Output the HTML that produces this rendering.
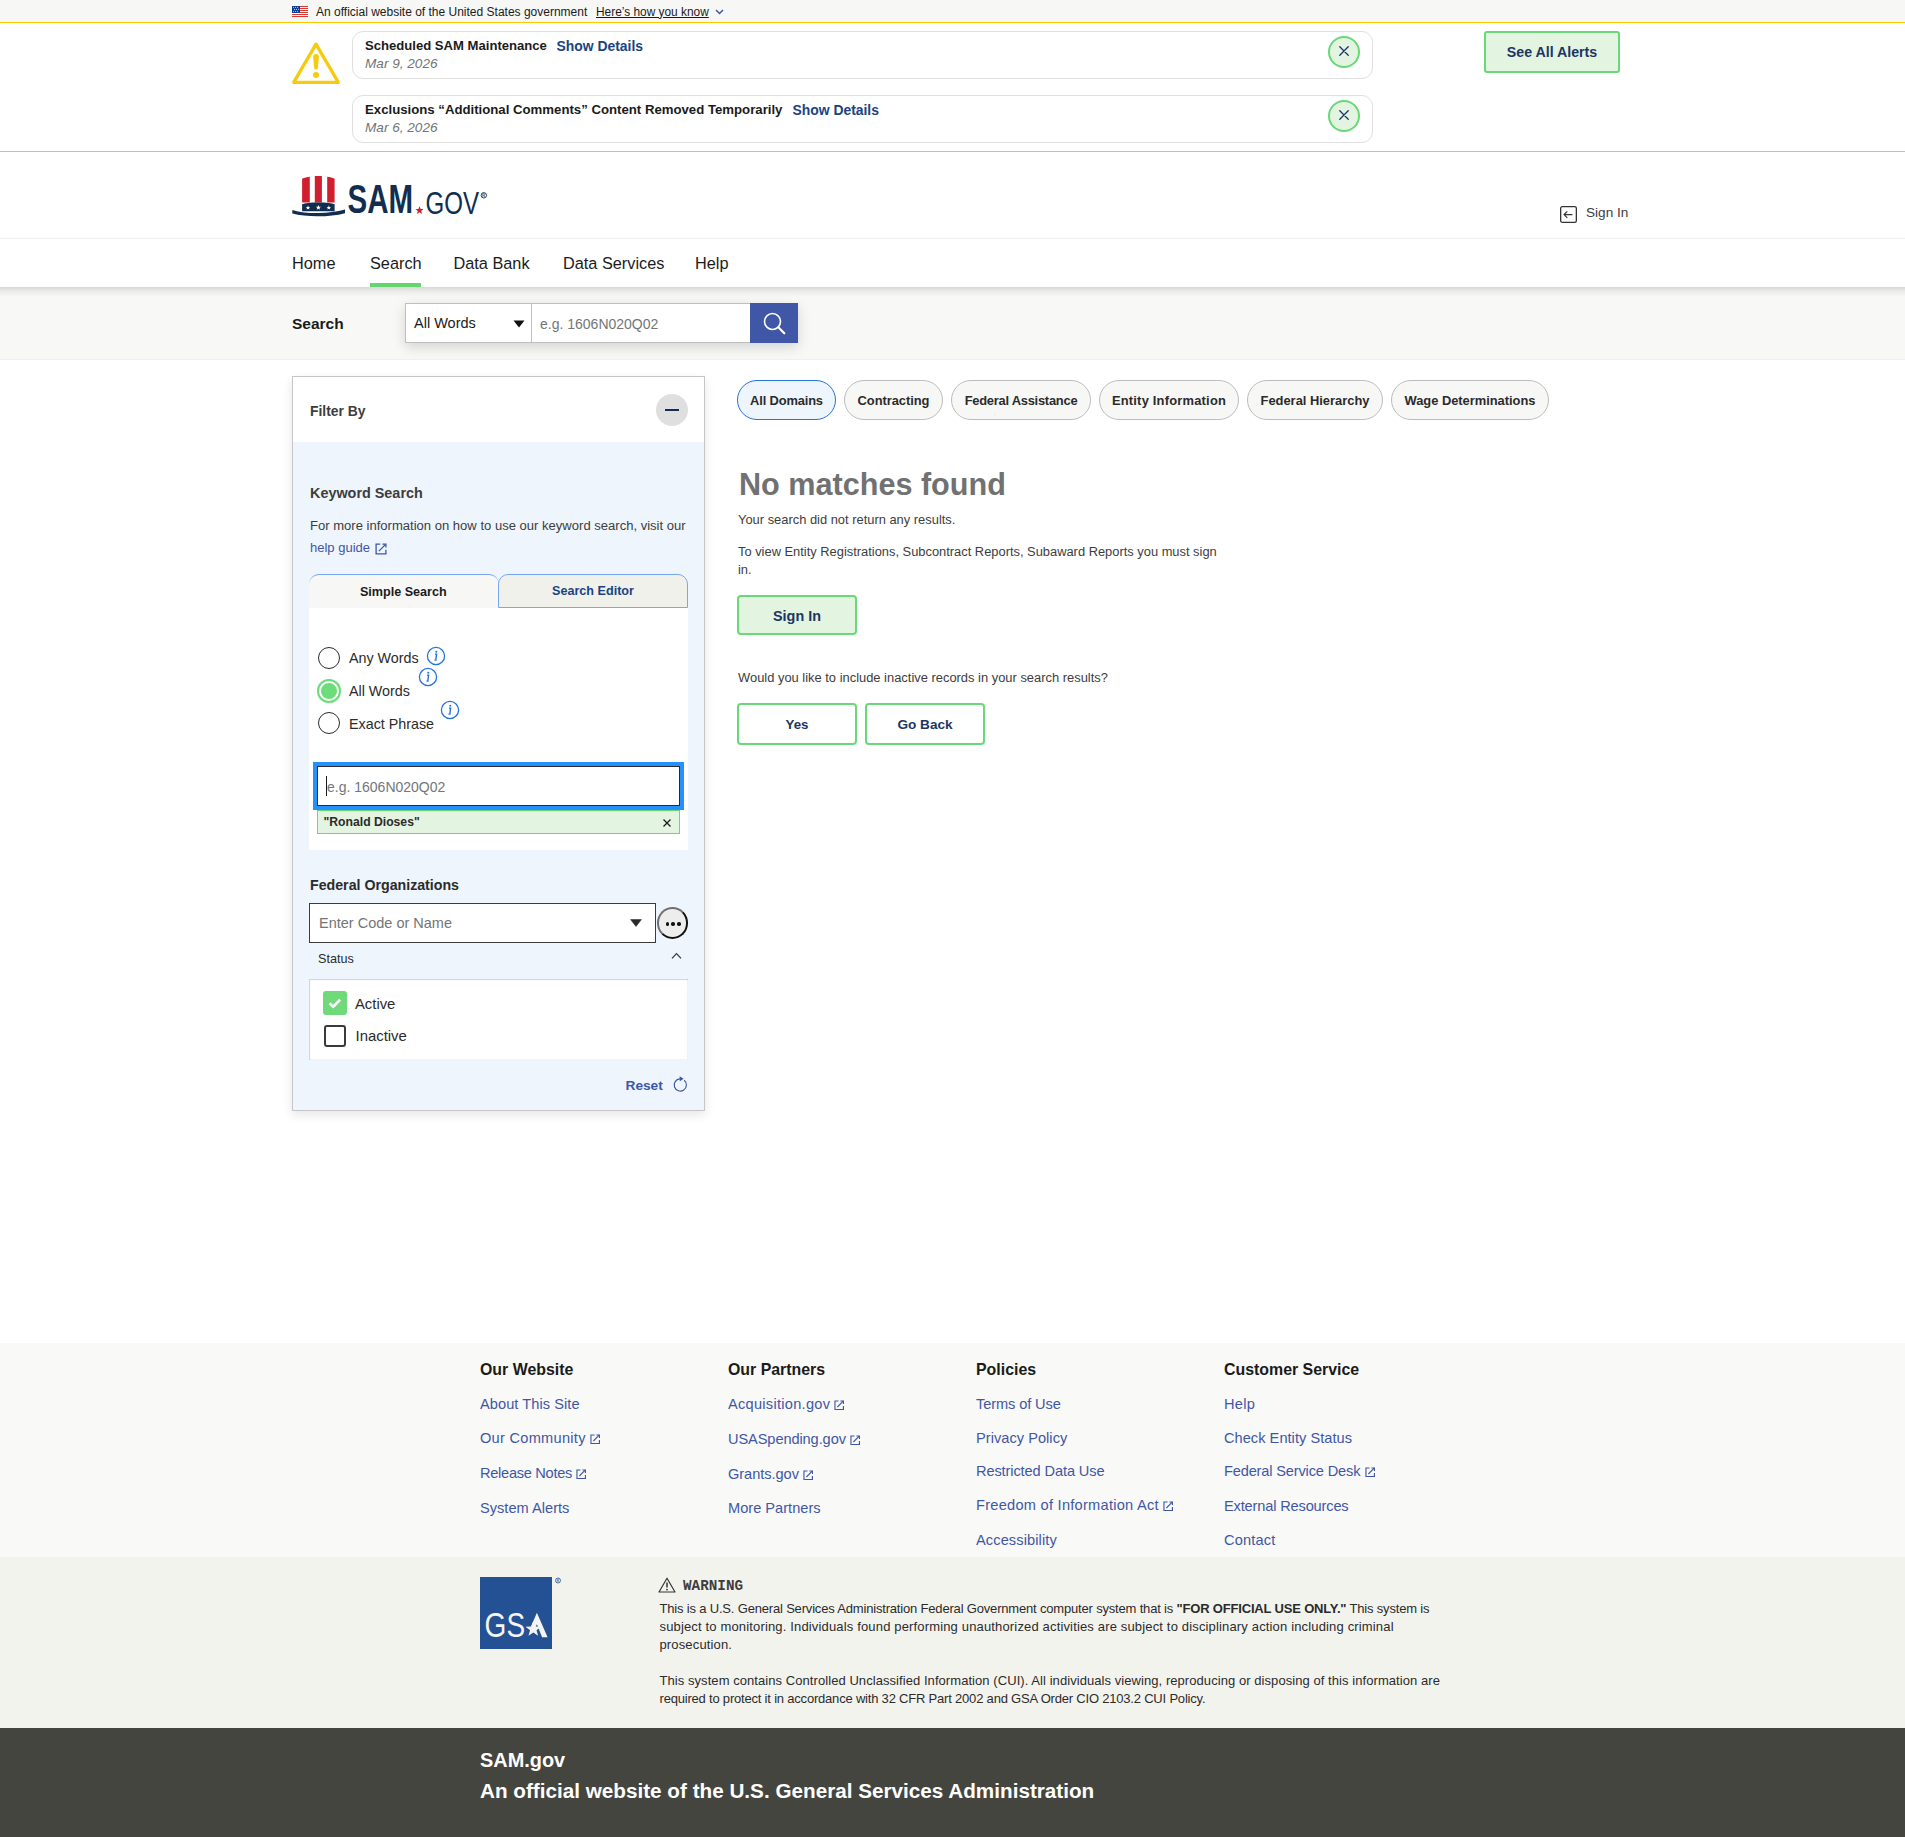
<!DOCTYPE html><html><head><meta charset="utf-8"><style>
html,body{margin:0;padding:0;}
body{width:1905px;height:1837px;position:relative;overflow:hidden;background:#fff;font-family:"Liberation Sans", sans-serif;}
.t{position:absolute;white-space:nowrap;}
.r{position:absolute;box-sizing:border-box;}
</style></head><body>
<div class="r" style="left:0px;top:0px;width:1905px;height:22px;background:#f7f7f5;"></div>
<div class="r" style="left:0px;top:22px;width:1905px;height:1px;background:#f8c800;"></div>
<svg class="r" style="left:292px;top:6px" width="16" height="11" viewBox="0 0 16 11">
<rect width="16" height="11" fill="#fff"/>
<g fill="#d83933"><rect y="0" width="16" height="1"/><rect y="2" width="16" height="1"/><rect y="4" width="16" height="1"/><rect y="6" width="16" height="1"/><rect y="8" width="16" height="1"/><rect y="10" width="16" height="1"/></g>
<rect width="8" height="7" fill="#0b3d91"/>
<g fill="#fff"><circle cx="1.6" cy="1.3" r=".5"/><circle cx="3.6" cy="1.3" r=".5"/><circle cx="5.6" cy="1.3" r=".5"/><circle cx="2.6" cy="3.3" r=".5"/><circle cx="4.6" cy="3.3" r=".5"/><circle cx="6.6" cy="3.3" r=".5"/><circle cx="1.6" cy="5.3" r=".5"/><circle cx="3.6" cy="5.3" r=".5"/><circle cx="5.6" cy="5.3" r=".5"/></g></svg>
<div class="t" style="left:316px;top:4.84px;font-size:12px;line-height:14px;color:#1b1b1b;">An official website of the United States government</div>
<div class="t" style="left:596px;top:4.87px;font-size:11.9px;line-height:14px;color:#1b1b1b;text-decoration:underline;">Here’s how you know</div>
<svg class="r" style="left:715px;top:9px" width="9" height="6" viewBox="0 0 9 6"><path d="M1 1l3.5 3.5L8 1" fill="none" stroke="#3f57a6" stroke-width="1.5"/></svg>
<div class="r" style="left:0px;top:151px;width:1905px;height:1px;background:#f8c800;"></div>
<svg class="r" style="left:291px;top:40px" width="50" height="46" viewBox="0 0 50 46"><path d="M25 4.2L2.7 42.4h44.6z" fill="none" stroke="#f6cb0e" stroke-width="3.3" stroke-linejoin="round"/><path d="M22.1 16.9a2.9 2.9 0 0 1 5.8 0l-1.2 12.3h-3.4z" fill="#f6cb0e"/><circle cx="25" cy="35" r="3" fill="#f6cb0e"/></svg>
<div class="r" style="left:352px;top:31px;width:1021px;height:48px;border:1px solid #e0e0e0;border-radius:11px;background:#fff;"></div>
<div class="t" style="left:365px;top:38.46px;font-size:13.1px;line-height:16px;color:#1b1b1b;font-weight:700;">Scheduled SAM Maintenance</div>
<div class="t" style="left:556.6px;top:37.68px;font-size:13.9px;line-height:17px;color:#1a4480;font-weight:700;">Show Details</div>
<div class="t" style="left:365px;top:55.88px;font-size:13.6px;line-height:16px;color:#71767a;font-style:italic;">Mar 9, 2026</div>
<div class="r" style="left:1328px;top:36px;width:32px;height:32px;border:2px solid #68d878;border-radius:50%;background:#e3f4e1;"></div>
<svg class="r" style="left:1338.5px;top:46.4px" width="10" height="10" viewBox="0 0 10 10"><path d="M.8.8l8.4 8.4M9.2.8L.8 9.2" stroke="#1c3664" stroke-width="1.3" stroke-linecap="round"/></svg>
<div class="r" style="left:352px;top:95px;width:1021px;height:48px;border:1px solid #e0e0e0;border-radius:11px;background:#fff;"></div>
<div class="t" style="left:365px;top:102.42px;font-size:13.2px;line-height:16px;color:#1b1b1b;font-weight:700;">Exclusions “Additional Comments” Content Removed Temporarily</div>
<div class="t" style="left:792.5px;top:101.68px;font-size:13.9px;line-height:17px;color:#1a4480;font-weight:700;">Show Details</div>
<div class="t" style="left:365px;top:119.88px;font-size:13.6px;line-height:16px;color:#71767a;font-style:italic;">Mar 6, 2026</div>
<div class="r" style="left:1328px;top:100px;width:32px;height:32px;border:2px solid #68d878;border-radius:50%;background:#e3f4e1;"></div>
<svg class="r" style="left:1338.5px;top:110.4px" width="10" height="10" viewBox="0 0 10 10"><path d="M.8.8l8.4 8.4M9.2.8L.8 9.2" stroke="#1c3664" stroke-width="1.3" stroke-linecap="round"/></svg>
<div class="r" style="left:1484px;top:31px;width:136px;height:42px;border:2px solid #68d878;border-radius:3px;background:#e3f4e1;"></div>
<div class="t" style="left:1352.0px;top:43.58px;font-size:14.2px;line-height:17px;color:#1c3664;font-weight:700;width:400px;text-align:center;">See All Alerts</div>
<svg class="r" style="left:292px;top:175px" width="197" height="42" viewBox="0 0 197 42">
<path d="M10.1 3.8C12.5 2.6 15 2 17.8 1.7V27.5H10.1z" fill="#d01f2e"/>
<path d="M22.8 1h7.1v26.5h-7.1z" fill="#d01f2e"/>
<path d="M35.2 1.7C38 2 40.3 2.6 42.6 3.8V27.5h-7.4z" fill="#d01f2e"/>
<path d="M10.1 29.2C14 26.8 38.5 26.8 42.6 29.2V36.3H10.1z" fill="#112e51"/>
<g fill="#fff"><path d="M16 30.4l.6 1.5 1.6.1-1.2 1 .4 1.6-1.4-.9-1.4.9.4-1.6-1.2-1 1.6-.1z"/><path d="M26.4 30l.7 1.7 1.8.1-1.4 1.1.5 1.8-1.6-1-1.6 1 .5-1.8-1.4-1.1 1.8-.1z"/><path d="M36.8 30.4l.6 1.5 1.6.1-1.2 1 .4 1.6-1.4-.9-1.4.9.4-1.6-1.2-1 1.6-.1z"/></g>
<path d="M0.3 35C8 37.6 17.5 38.2 26.5 38.1 35.5 38 45 36.8 53 34.6v3.6C45 40.4 35.5 41.2 26.5 41.3 17.5 41.4 7.5 40.6 0.3 38.6z" fill="#112e51"/>
<text x="55.5" y="38" font-family="Liberation Sans" font-weight="700" font-size="40" fill="#112e51" textLength="65.5" lengthAdjust="spacingAndGlyphs">SAM</text>
<path d="M127.5 31.2l1.1 2.8 3 .1-2.4 1.9.9 2.9-2.6-1.7-2.6 1.7.9-2.9-2.4-1.9 3-.1z" fill="#d01f2e"/>
<text x="133.5" y="38.5" font-family="Liberation Sans" font-weight="400" font-size="30.5" fill="#112e51" textLength="53.5" lengthAdjust="spacingAndGlyphs">GOV</text>
<circle cx="191.8" cy="20.3" r="2.7" fill="none" stroke="#112e51" stroke-width=".9"/><path d="M190.8 22v-3.3h1.1c.7 0 1 .3 1 .8s-.3.8-1 .8h-1.1M191.9 20.3l1 1.7" fill="none" stroke="#112e51" stroke-width=".6"/>
</svg>
<svg class="r" style="left:1560px;top:206px" width="17" height="17" viewBox="0 0 17 17"><rect x=".65" y=".65" width="15.7" height="15.7" rx="1.6" fill="none" stroke="#333" stroke-width="1.3"/><path d="M12.4 8.6H4.2M7.3 5.4L4.1 8.6l3.2 3.2" fill="none" stroke="#333" stroke-width="1.2"/></svg>
<div class="t" style="left:1586px;top:205.28px;font-size:13.6px;line-height:16px;color:#3d3d3d;">Sign In</div>
<div class="r" style="left:0px;top:238px;width:1905px;height:1px;background:#efefeb;"></div>
<div class="t" style="left:292px;top:253.35px;font-size:16.3px;line-height:20px;color:#1b1b1b;">Home</div>
<div class="t" style="left:370px;top:253.35px;font-size:16.3px;line-height:20px;color:#1b1b1b;">Search</div>
<div class="t" style="left:453.5px;top:253.35px;font-size:16.3px;line-height:20px;color:#1b1b1b;">Data Bank</div>
<div class="t" style="left:563px;top:253.35px;font-size:16.3px;line-height:20px;color:#1b1b1b;">Data Services</div>
<div class="t" style="left:695px;top:253.35px;font-size:16.3px;line-height:20px;color:#1b1b1b;">Help</div>
<div class="r" style="left:370px;top:283px;width:51px;height:4px;background:#66d46f;"></div>
<div class="r" style="left:0px;top:287px;width:1905px;height:73px;background:#f8f8f6;"></div>
<div class="r" style="left:0px;top:287px;width:1905px;height:10px;background:linear-gradient(rgba(0,0,0,.13),rgba(0,0,0,.05) 45%,rgba(0,0,0,0));"></div>
<div class="r" style="left:0px;top:359px;width:1905px;height:1px;background:#f0f0ec;"></div>
<div class="t" style="left:292px;top:314.13px;font-size:15.5px;line-height:19px;color:#1b1b1b;font-weight:700;">Search</div>
<div class="r" style="left:405px;top:303px;width:393px;height:40px;box-shadow:0 4px 12px rgba(0,0,0,.15);"></div>
<div class="r" style="left:405px;top:303px;width:127px;height:40px;background:#fff;border:1px solid #bfbfbf;"></div>
<div class="t" style="left:414px;top:315.47px;font-size:14.5px;line-height:17px;color:#1b1b1b;">All Words</div>
<svg class="r" style="left:513px;top:320px" width="12" height="8" viewBox="0 0 12 8"><path d="M.5.5h11L6 7.5z" fill="#111"/></svg>
<div class="r" style="left:531px;top:303px;width:220px;height:40px;background:#fff;border:1px solid #bfbfbf;"></div>
<div class="t" style="left:540px;top:315.65px;font-size:14px;line-height:17px;color:#71767a;">e.g. 1606N020Q02</div>
<div class="r" style="left:750px;top:303px;width:48px;height:40px;background:#3f57a6;"></div>
<svg class="r" style="left:762px;top:311px" width="25" height="25" viewBox="0 0 25 25"><circle cx="10.5" cy="10.5" r="8" fill="none" stroke="#fff" stroke-width="1.6"/><path d="M16.3 16.3l6 6" stroke="#fff" stroke-width="2.2" stroke-linecap="round"/></svg>
<div class="r" style="left:292px;top:376px;width:413px;height:735px;border:1px solid #c6c6c6;background:#fff;box-shadow:0 4px 10px rgba(0,0,0,.10);"></div>
<div class="r" style="left:293px;top:442px;width:411px;height:668px;background:#eef5fc;"></div>
<div class="t" style="left:310px;top:402.68px;font-size:13.9px;line-height:17px;color:#3d3d3d;font-weight:700;">Filter By</div>
<div class="r" style="left:655.5px;top:393.5px;width:32px;height:32px;border-radius:50%;background:#dfdfdf;"></div>
<div class="r" style="left:665px;top:409.2px;width:14px;height:1.6px;background:#112e51;"></div>
<div class="t" style="left:310px;top:484.51px;font-size:14.4px;line-height:17px;color:#3d3d3d;font-weight:700;">Keyword Search</div>
<div class="t" style="left:310px;top:518.47px;font-size:13.06px;line-height:16px;color:#3d3d3d;">For more information on how to use our keyword search, visit our</div>
<div class="t" style="left:310px;top:540.49px;font-size:13px;line-height:16px;color:#3f57a6;">help guide</div>
<svg class="r" style="left:375px;top:543px" width="12" height="12" viewBox="0 0 12 12"><path d="M5.2 1.1H1.1v9.8h9.8V6.8" fill="none" stroke="#3f57a6" stroke-width="1.3"/><path d="M7.4 1.1h3.5v3.5" fill="none" stroke="#3f57a6" stroke-width="1.3"/><path d="M10.6 1.4L3.9 8.1" fill="none" stroke="#3f57a6" stroke-width="1.3"/></svg>
<div class="r" style="left:309px;top:608px;width:379px;height:242px;background:#fff;"></div>
<div class="r" style="left:309px;top:574px;width:190px;height:34px;background:#f7f7f5;border-top:1px solid #7aa7f3;border-radius:10px 10px 0 0;"></div>
<div class="r" style="left:498px;top:574px;width:190px;height:34px;background:#f1f1ec;border:1px solid #7aa7f3;border-radius:10px 10px 0 0;"></div>
<div class="t" style="left:203.3px;top:585.13px;font-size:12.6px;line-height:15px;color:#1b1b1b;font-weight:700;width:400px;text-align:center;">Simple Search</div>
<div class="t" style="left:393.0px;top:584.13px;font-size:12.6px;line-height:15px;color:#1a4480;font-weight:700;width:400px;text-align:center;">Search Editor</div>
<div class="r" style="left:318px;top:647px;width:22px;height:22px;border-radius:50%;border:1.5px solid #2b2b2b;background:#fff;"></div>
<div class="t" style="left:349px;top:649.54px;font-size:14.3px;line-height:17px;color:#2b2b2b;">Any Words</div>
<div class="r" style="left:317px;top:679px;width:24px;height:24px;border-radius:50%;background:#6ddc7a;box-shadow:inset 0 0 0 2px #6ddc7a, inset 0 0 0 4px #fff;"></div>
<div class="t" style="left:349px;top:682.54px;font-size:14.3px;line-height:17px;color:#2b2b2b;">All Words</div>
<div class="r" style="left:318px;top:712px;width:22px;height:22px;border-radius:50%;border:1.5px solid #2b2b2b;background:#fff;"></div>
<div class="t" style="left:349px;top:715.54px;font-size:14.3px;line-height:17px;color:#2b2b2b;">Exact Phrase</div>
<svg class="r" style="left:426px;top:646px" width="20" height="20" viewBox="0 0 20 20"><circle cx="10" cy="10" r="8.6" fill="none" stroke="#2672de" stroke-width="1.3"/><circle cx="10.3" cy="5.7" r="1.05" fill="#2672de"/><path d="M9.1 8.3h1.5l-.8 5.6" fill="none" stroke="#2672de" stroke-width="1.4"/><path d="M8.3 14.1h2.4" stroke="#2672de" stroke-width="1.1"/></svg>
<svg class="r" style="left:418px;top:667px" width="20" height="20" viewBox="0 0 20 20"><circle cx="10" cy="10" r="8.6" fill="none" stroke="#2672de" stroke-width="1.3"/><circle cx="10.3" cy="5.7" r="1.05" fill="#2672de"/><path d="M9.1 8.3h1.5l-.8 5.6" fill="none" stroke="#2672de" stroke-width="1.4"/><path d="M8.3 14.1h2.4" stroke="#2672de" stroke-width="1.1"/></svg>
<svg class="r" style="left:440px;top:700px" width="20" height="20" viewBox="0 0 20 20"><circle cx="10" cy="10" r="8.6" fill="none" stroke="#2672de" stroke-width="1.3"/><circle cx="10.3" cy="5.7" r="1.05" fill="#2672de"/><path d="M9.1 8.3h1.5l-.8 5.6" fill="none" stroke="#2672de" stroke-width="1.4"/><path d="M8.3 14.1h2.4" stroke="#2672de" stroke-width="1.1"/></svg>
<div class="r" style="left:313px;top:762px;width:371px;height:48px;background:#2491ff;"></div>
<div class="r" style="left:317px;top:766px;width:363px;height:40px;background:#fff;border:1px solid #2b2b2b;"></div>
<div class="r" style="left:326px;top:776px;width:1.3px;height:20px;background:#1b1b1b;"></div>
<div class="t" style="left:327px;top:778.65px;font-size:14px;line-height:17px;color:#71767a;">e.g. 1606N020Q02</div>
<div class="r" style="left:317px;top:810px;width:363px;height:24px;background:#e3f4e1;border:1px solid #68d878;"></div>
<div class="t" style="left:323.5px;top:815.27px;font-size:12.2px;line-height:15px;color:#2b2b2b;font-weight:700;">"Ronald Dioses"</div>
<svg class="r" style="left:662px;top:818px" width="10" height="10" viewBox="0 0 10 10"><path d="M1.5 1.5l7 7M8.5 1.5l-7 7" stroke="#1b1b1b" stroke-width="1.3"/></svg>
<div class="t" style="left:310px;top:876.58px;font-size:14.2px;line-height:17px;color:#2b2b2b;font-weight:700;">Federal Organizations</div>
<div class="r" style="left:309px;top:903px;width:347px;height:40px;background:#fff;border:1px solid #3b3b3b;"></div>
<div class="t" style="left:319px;top:915.47px;font-size:14.5px;line-height:17px;color:#757575;">Enter Code or Name</div>
<svg class="r" style="left:630px;top:919px" width="12" height="8" viewBox="0 0 12 8"><path d="M.6.6h10.8L6 7.4z" fill="#2b2b2b" stroke="#2b2b2b" stroke-width=".6" stroke-linejoin="round"/></svg>
<div class="r" style="left:656.8px;top:907px;width:31px;height:31.6px;border-radius:50%;border:2px solid;border-color:#707070 #111 #111 #707070;background:#ededed;"></div>
<div class="r" style="left:665.6px;top:922.2px;width:3.6px;height:3.6px;border-radius:50%;background:#111;"></div>
<div class="r" style="left:671.4000000000001px;top:922.2px;width:3.6px;height:3.6px;border-radius:50%;background:#111;"></div>
<div class="r" style="left:677.2px;top:922.2px;width:3.6px;height:3.6px;border-radius:50%;background:#111;"></div>
<div class="t" style="left:318px;top:952.13px;font-size:12.6px;line-height:15px;color:#2b2b2b;">Status</div>
<svg class="r" style="left:671px;top:950.5px" width="11" height="9" viewBox="0 0 11 9"><path d="M1 7.3l4.5-4.6 4.5 4.6" fill="none" stroke="#333" stroke-width="1.2"/></svg>
<div class="r" style="left:309px;top:979px;width:379px;height:81px;background:#fff;box-shadow:inset 1px 1px 1px rgba(0,0,0,.18), inset -1px -1px 0 rgba(0,0,0,.05);"></div>
<div class="r" style="left:323px;top:991px;width:24px;height:24px;background:#70da7b;border-radius:3px;"></div>
<svg class="r" style="left:323px;top:991px" width="24" height="24" viewBox="0 0 24 24"><path d="M6.6 12.2l3.6 3.4 6.9-6.8" fill="none" stroke="#fff" stroke-width="2.6"/></svg>
<div class="t" style="left:355px;top:994.87px;font-size:14.8px;line-height:18px;color:#2b2b2b;">Active</div>
<div class="r" style="left:324px;top:1025px;width:22px;height:22px;border:2px solid #3a3a3a;border-radius:3px;background:#fff;"></div>
<div class="t" style="left:355.5px;top:1026.83px;font-size:14.9px;line-height:18px;color:#2b2b2b;">Inactive</div>
<div class="t" style="left:625.5px;top:1078.25px;font-size:13.7px;line-height:16px;color:#3f57a6;font-weight:700;">Reset</div>
<svg class="r" style="left:671px;top:1074px" width="18" height="19" viewBox="0 0 18 19"><path d="M13.2 6.3A6.1 6.1 0 1 1 8.9 4.9" fill="none" stroke="#3f57a6" stroke-width="1.15"/><path d="M8.6 2.3l4 2.4-3.8 2.6z" fill="#3f57a6"/></svg>
<div class="r" style="left:737px;top:380px;width:99px;height:40px;border:1.5px solid #2672de;border-radius:20px;background:#eef5fc;"></div>
<div class="t" style="left:586.5px;top:392.63px;font-size:12.9px;line-height:15px;color:#2b2b2b;font-weight:700;width:400px;text-align:center;letter-spacing:-0.155px;">All Domains</div>
<div class="r" style="left:844px;top:380px;width:99px;height:40px;border:1px solid #bdbdbd;border-radius:20px;background:#f7f7f5;"></div>
<div class="t" style="left:693.5px;top:392.63px;font-size:12.9px;line-height:15px;color:#2b2b2b;font-weight:700;width:400px;text-align:center;letter-spacing:-0.038px;">Contracting</div>
<div class="r" style="left:951px;top:380px;width:140px;height:40px;border:1px solid #bdbdbd;border-radius:20px;background:#f7f7f5;"></div>
<div class="t" style="left:821.0px;top:392.63px;font-size:12.9px;line-height:15px;color:#2b2b2b;font-weight:700;width:400px;text-align:center;letter-spacing:-0.242px;">Federal Assistance</div>
<div class="r" style="left:1099px;top:380px;width:140px;height:40px;border:1px solid #bdbdbd;border-radius:20px;background:#f7f7f5;"></div>
<div class="t" style="left:969.0px;top:392.63px;font-size:12.9px;line-height:15px;color:#2b2b2b;font-weight:700;width:400px;text-align:center;letter-spacing:0.214px;">Entity Information</div>
<div class="r" style="left:1247px;top:380px;width:136px;height:40px;border:1px solid #bdbdbd;border-radius:20px;background:#f7f7f5;"></div>
<div class="t" style="left:1115.0px;top:392.63px;font-size:12.9px;line-height:15px;color:#2b2b2b;font-weight:700;width:400px;text-align:center;letter-spacing:0.001px;">Federal Hierarchy</div>
<div class="r" style="left:1391px;top:380px;width:158px;height:40px;border:1px solid #bdbdbd;border-radius:20px;background:#f7f7f5;"></div>
<div class="t" style="left:1270.0px;top:392.63px;font-size:12.9px;line-height:15px;color:#2b2b2b;font-weight:700;width:400px;text-align:center;letter-spacing:-0.023px;">Wage Determinations</div>
<div class="t" style="left:739px;top:465.89px;font-size:30.6px;line-height:37px;color:#717171;font-weight:700;">No matches found</div>
<div class="t" style="left:738px;top:512.03px;font-size:12.9px;line-height:15px;color:#3d3d3d;">Your search did not return any results.</div>
<div class="t" style="left:738px;top:544.03px;font-size:12.88px;line-height:15px;color:#3d3d3d;">To view Entity Registrations, Subcontract Reports, Subaward Reports you must sign</div>
<div class="t" style="left:738px;top:562.03px;font-size:12.88px;line-height:15px;color:#3d3d3d;">in.</div>
<div class="r" style="left:737px;top:595px;width:120px;height:40px;border:2px solid #68d878;border-radius:4px;background:#e3f4e1;"></div>
<div class="t" style="left:597.0px;top:607.51px;font-size:14.4px;line-height:17px;color:#1c3664;font-weight:700;width:400px;text-align:center;">Sign In</div>
<div class="t" style="left:738px;top:670.02px;font-size:12.91px;line-height:15px;color:#3d3d3d;">Would you like to include inactive records in your search results?</div>
<div class="r" style="left:737px;top:703px;width:120px;height:42px;border:2px solid #68d878;border-radius:4px;background:#fff;"></div>
<div class="t" style="left:597.0px;top:717.39px;font-size:13.3px;line-height:16px;color:#1c3664;font-weight:700;width:400px;text-align:center;">Yes</div>
<div class="r" style="left:865px;top:703px;width:120px;height:42px;border:2px solid #68d878;border-radius:4px;background:#fff;"></div>
<div class="t" style="left:725.0px;top:717.28px;font-size:13.6px;line-height:16px;color:#1c3664;font-weight:700;width:400px;text-align:center;">Go Back</div>
<div class="r" style="left:0px;top:1343px;width:1905px;height:214px;background:#f9f9f7;"></div>
<div class="t" style="left:480px;top:1359.99px;font-size:15.9px;line-height:19px;color:#1b1b1b;font-weight:700;">Our Website</div>
<div class="t" style="left:480px;top:1394.94px;font-size:14.6px;line-height:18px;color:#3f57a6;letter-spacing:0.061px;">About This Site</div>
<div class="t" style="left:480px;top:1429.44px;font-size:14.6px;line-height:18px;color:#3f57a6;letter-spacing:0.273px;">Our Community</div>
<svg class="r" style="left:589.5px;top:1434.3px" width="10.4" height="10.4" viewBox="0 0 12 12"><path d="M5.2 1.1H1.1v9.8h9.8V6.8" fill="none" stroke="#3f57a6" stroke-width="1.3"/><path d="M7.4 1.1h3.5v3.5" fill="none" stroke="#3f57a6" stroke-width="1.3"/><path d="M10.6 1.4L3.9 8.1" fill="none" stroke="#3f57a6" stroke-width="1.3"/></svg>
<div class="t" style="left:480px;top:1464.44px;font-size:14.6px;line-height:18px;color:#3f57a6;letter-spacing:-0.280px;">Release Notes</div>
<svg class="r" style="left:576.4px;top:1469.3px" width="10.4" height="10.4" viewBox="0 0 12 12"><path d="M5.2 1.1H1.1v9.8h9.8V6.8" fill="none" stroke="#3f57a6" stroke-width="1.3"/><path d="M7.4 1.1h3.5v3.5" fill="none" stroke="#3f57a6" stroke-width="1.3"/><path d="M10.6 1.4L3.9 8.1" fill="none" stroke="#3f57a6" stroke-width="1.3"/></svg>
<div class="t" style="left:480px;top:1498.94px;font-size:14.6px;line-height:18px;color:#3f57a6;letter-spacing:0.013px;">System Alerts</div>
<div class="t" style="left:728px;top:1359.99px;font-size:15.9px;line-height:19px;color:#1b1b1b;font-weight:700;">Our Partners</div>
<div class="t" style="left:728px;top:1394.94px;font-size:14.6px;line-height:18px;color:#3f57a6;letter-spacing:0.271px;">Acquisition.gov</div>
<svg class="r" style="left:834px;top:1399.8px" width="10.4" height="10.4" viewBox="0 0 12 12"><path d="M5.2 1.1H1.1v9.8h9.8V6.8" fill="none" stroke="#3f57a6" stroke-width="1.3"/><path d="M7.4 1.1h3.5v3.5" fill="none" stroke="#3f57a6" stroke-width="1.3"/><path d="M10.6 1.4L3.9 8.1" fill="none" stroke="#3f57a6" stroke-width="1.3"/></svg>
<div class="t" style="left:728px;top:1429.94px;font-size:14.6px;line-height:18px;color:#3f57a6;letter-spacing:-0.094px;">USASpending.gov</div>
<svg class="r" style="left:850px;top:1434.8px" width="10.4" height="10.4" viewBox="0 0 12 12"><path d="M5.2 1.1H1.1v9.8h9.8V6.8" fill="none" stroke="#3f57a6" stroke-width="1.3"/><path d="M7.4 1.1h3.5v3.5" fill="none" stroke="#3f57a6" stroke-width="1.3"/><path d="M10.6 1.4L3.9 8.1" fill="none" stroke="#3f57a6" stroke-width="1.3"/></svg>
<div class="t" style="left:728px;top:1464.94px;font-size:14.6px;line-height:18px;color:#3f57a6;letter-spacing:-0.046px;">Grants.gov</div>
<svg class="r" style="left:803px;top:1469.8px" width="10.4" height="10.4" viewBox="0 0 12 12"><path d="M5.2 1.1H1.1v9.8h9.8V6.8" fill="none" stroke="#3f57a6" stroke-width="1.3"/><path d="M7.4 1.1h3.5v3.5" fill="none" stroke="#3f57a6" stroke-width="1.3"/><path d="M10.6 1.4L3.9 8.1" fill="none" stroke="#3f57a6" stroke-width="1.3"/></svg>
<div class="t" style="left:728px;top:1499.44px;font-size:14.6px;line-height:18px;color:#3f57a6;letter-spacing:0.008px;">More Partners</div>
<div class="t" style="left:976px;top:1359.99px;font-size:15.9px;line-height:19px;color:#1b1b1b;font-weight:700;">Policies</div>
<div class="t" style="left:976px;top:1394.94px;font-size:14.6px;line-height:18px;color:#3f57a6;letter-spacing:-0.109px;">Terms of Use</div>
<div class="t" style="left:976px;top:1428.94px;font-size:14.6px;line-height:18px;color:#3f57a6;letter-spacing:0.033px;">Privacy Policy</div>
<div class="t" style="left:976px;top:1461.94px;font-size:14.6px;line-height:18px;color:#3f57a6;letter-spacing:-0.113px;">Restricted Data Use</div>
<div class="t" style="left:976px;top:1495.94px;font-size:14.6px;line-height:18px;color:#3f57a6;letter-spacing:0.264px;">Freedom of Information Act</div>
<svg class="r" style="left:1162.7px;top:1500.8px" width="10.4" height="10.4" viewBox="0 0 12 12"><path d="M5.2 1.1H1.1v9.8h9.8V6.8" fill="none" stroke="#3f57a6" stroke-width="1.3"/><path d="M7.4 1.1h3.5v3.5" fill="none" stroke="#3f57a6" stroke-width="1.3"/><path d="M10.6 1.4L3.9 8.1" fill="none" stroke="#3f57a6" stroke-width="1.3"/></svg>
<div class="t" style="left:976px;top:1530.94px;font-size:14.6px;line-height:18px;color:#3f57a6;letter-spacing:0.107px;">Accessibility</div>
<div class="t" style="left:1224px;top:1359.99px;font-size:15.9px;line-height:19px;color:#1b1b1b;font-weight:700;">Customer Service</div>
<div class="t" style="left:1224px;top:1394.94px;font-size:14.6px;line-height:18px;color:#3f57a6;letter-spacing:0.324px;">Help</div>
<div class="t" style="left:1224px;top:1428.94px;font-size:14.6px;line-height:18px;color:#3f57a6;letter-spacing:0.033px;">Check Entity Status</div>
<div class="t" style="left:1224px;top:1461.94px;font-size:14.6px;line-height:18px;color:#3f57a6;letter-spacing:-0.161px;">Federal Service Desk</div>
<svg class="r" style="left:1364.5px;top:1466.8px" width="10.4" height="10.4" viewBox="0 0 12 12"><path d="M5.2 1.1H1.1v9.8h9.8V6.8" fill="none" stroke="#3f57a6" stroke-width="1.3"/><path d="M7.4 1.1h3.5v3.5" fill="none" stroke="#3f57a6" stroke-width="1.3"/><path d="M10.6 1.4L3.9 8.1" fill="none" stroke="#3f57a6" stroke-width="1.3"/></svg>
<div class="t" style="left:1224px;top:1496.94px;font-size:14.6px;line-height:18px;color:#3f57a6;letter-spacing:-0.159px;">External Resources</div>
<div class="t" style="left:1224px;top:1530.94px;font-size:14.6px;line-height:18px;color:#3f57a6;letter-spacing:0.181px;">Contact</div>
<div class="r" style="left:0px;top:1557px;width:1905px;height:171px;background:#f3f3ee;"></div>
<svg class="r" style="left:480px;top:1577px" width="84" height="72" viewBox="0 0 84 72"><rect width="72" height="72" fill="#245193"/>
<text x="4.6" y="60.4" font-family="Liberation Sans" font-weight="400" font-size="35" fill="#f4f4f0" textLength="40.5" lengthAdjust="spacingAndGlyphs">GS</text>
<path d="M56.9 35.8L67.6 60.2h-5.5L56.9 47.2 54.5 52.5 51 49.5z" fill="#f4f4f0"/>
<path d="M53.30 44.00 L55.30 49.45 L61.10 49.67 L56.53 53.25 L58.12 58.83 L53.30 55.60 L48.48 58.83 L50.07 53.25 L45.50 49.67 L51.30 49.45z" fill="#f4f4f0"/>
<circle cx="78" cy="3.5" r="2.5" fill="none" stroke="#245193" stroke-width=".8"/><path d="M77.2 5V2.2h1c.6 0 .9.3.9.7s-.3.7-.9.7h-1M78.2 3.6l.9 1.4" fill="none" stroke="#245193" stroke-width=".5"/></svg>
<svg class="r" style="left:658px;top:1577px" width="18" height="16" viewBox="0 0 18 16"><path d="M9 1.2L1 15h16z" fill="none" stroke="#333" stroke-width="1.2" stroke-linejoin="round"/><path d="M9 5.5v5" stroke="#333" stroke-width="1.5"/><circle cx="9" cy="12.6" r=".9" fill="#333"/></svg>
<div class="t" style="left:683px;top:1577.54px;font-size:14.3px;line-height:17px;color:#3d3d3d;font-weight:700;font-family:'Liberation Mono', monospace;">WARNING</div>
<div class="t" style="left:659.5px;top:1601.49px;font-size:13.0px;line-height:16px;color:#2b2b2b;letter-spacing:-0.180px;">This is a U.S. General Services Administration Federal Government computer system that is <b>"FOR OFFICIAL USE ONLY."</b> This system is</div>
<div class="t" style="left:659.5px;top:1619.49px;font-size:13.0px;line-height:16px;color:#2b2b2b;letter-spacing:0.157px;">subject to monitoring. Individuals found performing unauthorized activities are subject to disciplinary action including criminal</div>
<div class="t" style="left:659.5px;top:1637.49px;font-size:13.0px;line-height:16px;color:#2b2b2b;letter-spacing:0.143px;">prosecution.</div>
<div class="t" style="left:659.5px;top:1673.49px;font-size:13.0px;line-height:16px;color:#2b2b2b;letter-spacing:0.064px;">This system contains Controlled Unclassified Information (CUI). All individuals viewing, reproducing or disposing of this information are</div>
<div class="t" style="left:659.5px;top:1691.49px;font-size:13.0px;line-height:16px;color:#2b2b2b;letter-spacing:-0.200px;">required to protect it in accordance with 32 CFR Part 2002 and GSA Order CIO 2103.2 CUI Policy.</div>
<div class="r" style="left:0px;top:1728px;width:1905px;height:109px;background:#454540;"></div>
<div class="t" style="left:480px;top:1748.10px;font-size:19.9px;line-height:24px;color:#fff;font-weight:700;">SAM.gov</div>
<div class="t" style="left:480px;top:1778.32px;font-size:20.7px;line-height:25px;color:#fff;font-weight:700;">An official website of the U.S. General Services Administration</div>
</body></html>
